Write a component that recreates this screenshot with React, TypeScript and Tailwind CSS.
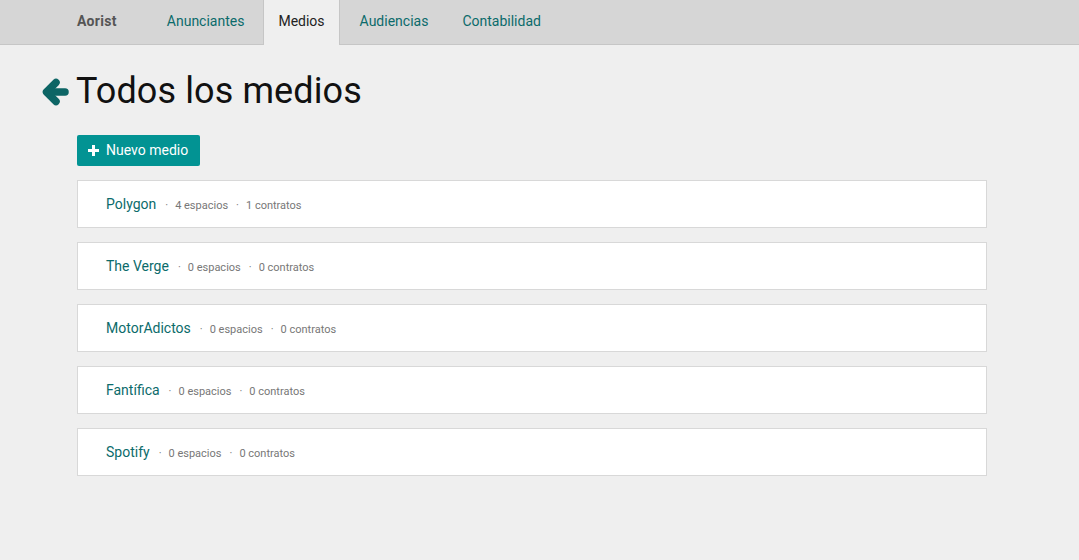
import React from "react";

const items = [
  { name: "Polygon", esp: 4, con: 1 },
  { name: "The Verge", esp: 0, con: 0 },
  { name: "MotorAdictos", esp: 0, con: 0 },
  { name: "Fantífica", esp: 0, con: 0 },
  { name: "Spotify", esp: 0, con: 0 },
];

export default function App() {
  return (
    <div className="min-h-[560px] bg-[#efefef] font-['Roboto',sans-serif] text-[#111]">
      <nav className="h-[45px] bg-[#d6d6d6] border-b border-[#c6c6c6]">
        <div className="flex h-[44px] items-stretch pl-[77px] text-[14px]">
          <span className="flex items-center pb-[2px] font-bold text-[#555] mr-[50px] tracking-[0.3px]">Aorist</span>
          <a className="flex items-center pb-[2px] text-[#0b6b6b] mr-[19px]">Anunciantes</a>
          <a className="flex items-center pb-[2px] px-[14px] h-[45px] bg-[#efefef] border-x border-[#c6c6c6] text-[#222] relative">Medios</a>
          <a className="flex items-center pb-[2px] ml-[20px] text-[#0b6b6b]">Audiencias</a>
          <a className="flex items-center pb-[2px] ml-[34px] text-[#0b6b6b]">Contabilidad</a>
        </div>
      </nav>

      <div className="pl-[42px] pt-[25px]">
        <div className="flex items-center h-[42px]">
          <svg width="27" height="28" viewBox="0 0 27 28" className="mr-[7px] mt-[1px]">
            <g fill="none" stroke="#0d6565" strokeWidth="7.5" strokeLinecap="round" strokeLinejoin="round">
              <polyline points="14,4.5 4.5,14 14,23.5" />
              <line x1="5" y1="14" x2="23" y2="14" />
            </g>
          </svg>
          <h1 className="text-[36px] leading-[42px] font-normal text-[#111] tracking-[0.1px]">Todos los medios</h1>
        </div>
      </div>

      <div className="pl-[77px] pt-[23px]">
        <button className="flex items-center h-[31px] w-[123px] pl-[11px] bg-[#029393] rounded-[2px] text-white text-[14px]">
          <svg width="11" height="11" viewBox="0 0 11 11" className="mr-[7px]">
            <rect x="4" y="0" width="3" height="11" fill="white" />
            <rect x="0" y="4" width="11" height="3" fill="white" />
          </svg>
          Nuevo medio
        </button>
        <div className="mt-[14px] flex flex-col gap-[14px] w-[910px]">
          {items.map((it) => (
            <div key={it.name} className="h-[48px] bg-white border border-[#d8d8d8] flex items-center pl-[28px] pt-[1px]">
              <div className="flex items-baseline">
                <span className="text-[14px] text-[#0b6b6b]">{it.name}</span>
                <span className="text-[11px] text-[#777] ml-[9px]">·</span>
                <span className="text-[11px] text-[#777] ml-[7px]">{it.esp} espacios</span>
                <span className="text-[11px] text-[#777] ml-[8px]">·</span>
                <span className="text-[11px] text-[#777] ml-[7px]">{it.con} contratos</span>
              </div>
            </div>
          ))}
        </div>
      </div>
    </div>
  );
}
